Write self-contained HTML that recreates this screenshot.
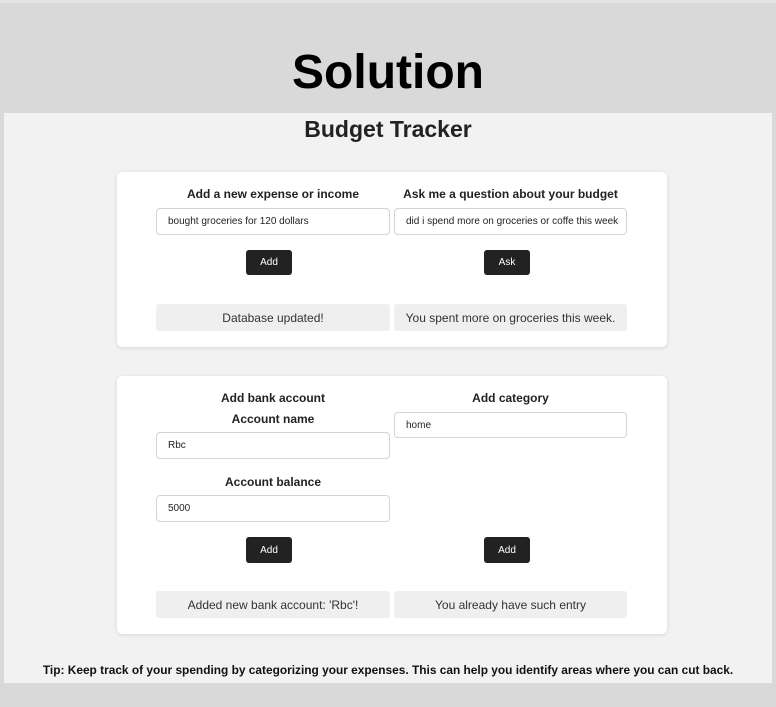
<!DOCTYPE html>
<html><head><meta charset="utf-8"><style>
*{box-sizing:border-box;margin:0;padding:0}
body{width:776px;height:707px;background:#d9d9d9;font-family:"Liberation Sans",sans-serif;position:relative;overflow:hidden;color:#222}
.a{position:absolute}
.panel{left:4px;top:113px;width:768px;height:570px;background:#f2f2f2}
.card{background:#fff;border-radius:5px;box-shadow:0 1px 4px rgba(0,0,0,0.12)}
.h{font-weight:bold;font-size:12px;text-align:center}
.in{background:#fff;border:1px solid #d4d4d4;border-radius:4px;font-size:10px;padding-left:11px;display:flex;align-items:center}
.btn{background:#222;color:#fff;border-radius:3px;font-size:10px;display:flex;align-items:center;justify-content:center;width:46px}
.msg{background:#efefef;border-radius:3px;font-size:12px;display:flex;align-items:center;justify-content:center;color:#333}
</style></head><body>
<div class="a" style="left:0;top:0;width:776px;height:3px;background:#e4e4e4"></div>
<div class="a" style="left:0;top:45px;width:776px;text-align:center;font-weight:bold;font-size:48px;color:#000">Solution</div>
<div class="a panel"></div>
<div class="a" style="left:0;top:116px;width:776px;text-align:center;font-weight:bold;font-size:23px;color:#222">Budget Tracker</div>

<div class="a card" style="left:117px;top:172px;width:550px;height:175px"></div>
<div class="a h" style="left:156px;top:187px;width:234px">Add a new expense or income</div>
<div class="a h" style="left:394px;top:187px;width:233px">Ask me a question about your budget</div>
<div class="a in" style="left:156px;top:208px;width:234px;height:27px">bought groceries for 120 dollars</div>
<div class="a in" style="left:394px;top:208px;width:233px;height:27px;white-space:nowrap;overflow:hidden">did i spend more on groceries or coffe this week</div>
<div class="a btn" style="left:246px;top:250px;height:25px">Add</div>
<div class="a btn" style="left:484px;top:250px;height:25px">Ask</div>
<div class="a msg" style="left:156px;top:304px;width:234px;height:27px">Database updated!</div>
<div class="a msg" style="left:394px;top:304px;width:233px;height:27px">You spent more on groceries this week.</div>

<div class="a card" style="left:117px;top:376px;width:550px;height:258px"></div>
<div class="a h" style="left:156px;top:391px;width:234px">Add bank account</div>
<div class="a h" style="left:156px;top:412px;width:234px">Account name</div>
<div class="a in" style="left:156px;top:432px;width:234px;height:27px">Rbc</div>
<div class="a h" style="left:156px;top:475px;width:234px">Account balance</div>
<div class="a in" style="left:156px;top:495px;width:234px;height:27px">5000</div>
<div class="a btn" style="left:246px;top:537px;height:26px">Add</div>
<div class="a h" style="left:394px;top:391px;width:233px">Add category</div>
<div class="a in" style="left:394px;top:412px;width:233px;height:26px">home</div>
<div class="a btn" style="left:484px;top:537px;height:26px">Add</div>
<div class="a msg" style="left:156px;top:591px;width:234px;height:27px">Added new bank account: 'Rbc'!</div>
<div class="a msg" style="left:394px;top:591px;width:233px;height:27px">You already have such entry</div>

<div class="a" style="left:0;top:663px;width:776px;text-align:center;font-weight:bold;font-size:11.9px;color:#111;white-space:nowrap">Tip: Keep track of your spending by categorizing your expenses. This can help you identify areas where you can cut back.</div>
</body></html>
